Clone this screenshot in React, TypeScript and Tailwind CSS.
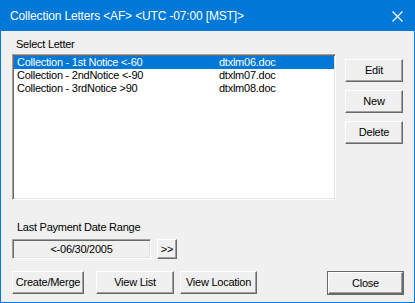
import React from "react";

const letters = [
  { name: "Collection - 1st Notice <-60", file: "dtxlm06.doc" },
  { name: "Collection - 2ndNotice <-90", file: "dtxlm07.doc" },
  { name: "Collection - 3rdNotice >90", file: "dtxlm08.doc" },
];

const bevel =
  "border border-t-white border-l-white border-r-[#696969] border-b-[#696969] shadow-[inset_-1px_-1px_0_#a0a0a0] bg-[#f0f0f0] text-black flex items-center justify-center";

const sunken =
  "border border-t-[#a0a0a0] border-l-[#a0a0a0] border-r-white border-b-white shadow-[inset_1px_1px_0_#696969,inset_-1px_-1px_0_#e3e3e3]";

function Btn({ label, className }: { label: string; className: string }) {
  return <div className={`${bevel} ${className}`}>{label}</div>;
}

export default function App() {
  return (
    <div
      className="w-[415px] h-[303px] border border-[#0078d7] bg-[#f0f0f0] flex flex-col text-[11px] leading-[13px] tracking-[-0.25px] text-black"
      style={{ fontFamily: '"Liberation Sans", Arial, sans-serif' }}
    >
      {/* title bar */}
      <div className="h-[30px] bg-[#0078d7] flex items-center pl-[9px] pr-[10px] text-white text-[12px] tracking-[-0.15px]">
        <span className="flex-1 pt-[1px]">Collection Letters &lt;AF&gt; &lt;UTC -07:00 [MST]&gt;</span>
        <svg width="11" height="11" viewBox="0 0 11 11" className="mr-[1px]">
          <path d="M0.5 0.5 L10.5 10.5 M10.5 0.5 L0.5 10.5" stroke="white" strokeWidth="1.2" />
        </svg>
      </div>

      <div className="flex-1 pl-[11px] pt-[7px]">
        <div className="pl-[4px]">Select Letter</div>

        <div className="flex mt-[3px]">
          {/* list box */}
          <div className={`w-[324px] h-[146px] bg-white ${sunken} p-[1px]`}>
            {letters.map((l, i) => (
              <div
                key={l.file}
                className={`flex h-[13px] pl-[3px] ${i === 0 ? "bg-[#0078d7] text-white" : ""}`}
              >
                <span className="w-[202px]">{l.name}</span>
                <span>{l.file}</span>
              </div>
            ))}
          </div>

          {/* side buttons */}
          <div className="flex flex-col ml-[9px] pt-[5px] gap-[8px]">
            <Btn label="Edit" className="w-[58px] h-[23px]" />
            <Btn label="New" className="w-[58px] h-[23px]" />
            <Btn label="Delete" className="w-[58px] h-[23px]" />
          </div>
        </div>

        <div className="pl-[5px] mt-[21px]">Last Payment Date Range</div>

        <div className="flex mt-[5px] items-center">
          <div className={`w-[139px] h-[20px] ${sunken} flex items-center justify-center`}>
            &lt;-06/30/2005
          </div>
          <Btn label="&gt;&gt;" className="w-[20px] h-[20px] ml-[6px]" />
        </div>

        <div className="flex mt-[12px]">
          <Btn label="Create/Merge" className="w-[72px] h-[23px]" />
          <Btn label="View List" className="w-[78px] h-[23px] ml-[12px]" />
          <Btn label="View Location" className="w-[77px] h-[23px] ml-[6px]" />
          <div className="ml-[70px] w-[77px] h-[24px] border border-[#696969]">
            <Btn label="Close" className="w-full h-full" />
          </div>
        </div>
      </div>
    </div>
  );
}
